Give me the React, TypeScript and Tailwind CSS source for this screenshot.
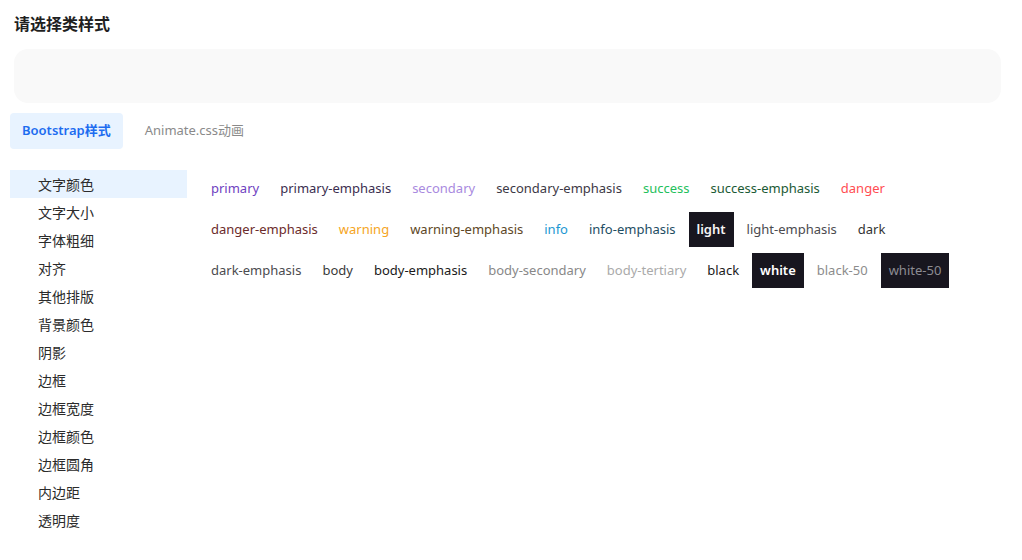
import { useState } from "react";

type Swatch = { name: string; color: string; chip?: boolean; bold?: boolean };

const SWATCHES: Swatch[] = [
  { name: "primary", color: "text-[#6f42c1]" },
  { name: "primary-emphasis", color: "text-[#3b2e4f]" },
  { name: "secondary", color: "text-[#a98ae0]" },
  { name: "secondary-emphasis", color: "text-[#3d3946]" },
  { name: "success", color: "text-[#1fbf5c]" },
  { name: "success-emphasis", color: "text-[#1b5a35]" },
  { name: "danger", color: "text-[#ff4d52]" },
  { name: "danger-emphasis", color: "text-[#6b2b2b]" },
  { name: "warning", color: "text-[#f5a524]" },
  { name: "warning-emphasis", color: "text-[#5e4726]" },
  { name: "info", color: "text-[#1c98d2]" },
  { name: "info-emphasis", color: "text-[#1e4d63]" },
  { name: "light", color: "text-[#f5f5f5]", chip: true, bold: true },
  { name: "light-emphasis", color: "text-[#4b4b4f]" },
  { name: "dark", color: "text-[#333333]" },
  { name: "dark-emphasis", color: "text-[#4b4b4f]" },
  { name: "body", color: "text-[#3a3a3a]" },
  { name: "body-emphasis", color: "text-[#1a1a1a]" },
  { name: "body-secondary", color: "text-[#888888]" },
  { name: "body-tertiary", color: "text-[#aaaaaa]" },
  { name: "black", color: "text-[#1a1a1a]" },
  { name: "white", color: "text-white", chip: true, bold: true },
  { name: "black-50", color: "text-[#8c8c8c]" },
  { name: "white-50", color: "text-[#8d8c93]", chip: true },
];

const MENU = [
  "文字颜色",
  "文字大小",
  "字体粗细",
  "对齐",
  "其他排版",
  "背景颜色",
  "阴影",
  "边框",
  "边框宽度",
  "边框颜色",
  "边框圆角",
  "内边距",
  "透明度",
];

export default function App() {
  const [tab, setTab] = useState(0);
  const [active, setActive] = useState(0);

  return (
    <main
      className="bg-white min-h-screen w-[1022px] h-[560px] overflow-hidden"
      style={{ fontFamily: '"Noto Sans", "Noto Sans CJK SC", sans-serif' }}
    >
      <div className="pt-[12px] px-[14px]">
        <h1 className="text-[16px] leading-[24px] font-semibold text-[#1f1f1f]">请选择类样式</h1>
        <div className="mt-[13px] h-[54px] w-[987px] rounded-[14px] bg-[#f9f9f9]" />
      </div>

      <div className="flex items-center gap-[6px] px-[10px] mt-[10px]">
        {["Bootstrap样式", "Animate.css动画"].map((t, i) => (
          <button
            key={t}
            onClick={() => setTab(i)}
            className={
              i === tab
                ? "h-[36px] px-[12px] rounded-[4px] bg-[#e8f3ff] text-[#1d6cf0] text-[13px] font-semibold"
                : "h-[36px] px-[16px] rounded-[4px] text-[#8a8a8a] text-[13px]"
            }
          >
            {t}
          </button>
        ))}
      </div>

      <div className="flex mt-[21px] px-[10px]">
        <ul className="w-[177px] shrink-0">
          {MENU.map((m, i) => (
            <li
              key={m}
              onClick={() => setActive(i)}
              className={`h-[28px] flex items-center pl-[28px] text-[14px] text-[#2b2b2b] cursor-pointer ${
                i === active ? "bg-[#e8f3ff]" : ""
              }`}
            >
              {m}
            </li>
          ))}
        </ul>

        <div className="flex flex-wrap content-start gap-x-[5px] gap-y-[6px] pt-[1px] pl-[16px] w-[800px]">
          {SWATCHES.map((s) => (
            <span
              key={s.name}
              className={`h-[35px] px-[8px] flex items-center text-[13px] ${s.color} ${
                s.chip ? "bg-[#18161f]" : ""
              } ${s.bold ? "font-semibold" : ""}`}
            >
              {s.name}
            </span>
          ))}
        </div>
      </div>
    </main>
  );
}
